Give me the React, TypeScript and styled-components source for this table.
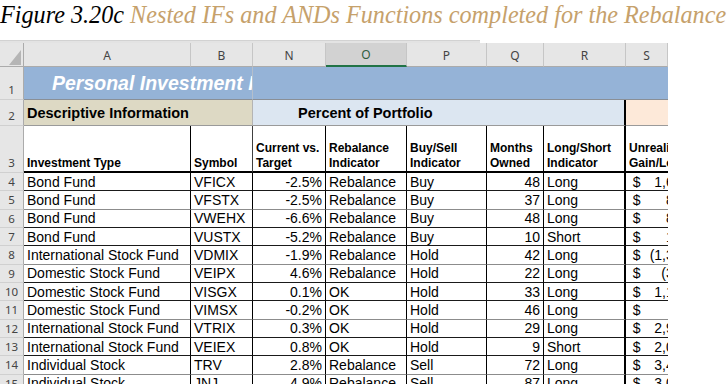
import { Fragment } from "react";
import styled, { createGlobalStyle } from "styled-components";

const GlobalStyle = createGlobalStyle`
    html, body {
        margin: 0;
        padding: 0;
        background: #fff;
        overflow: hidden;
    }
    body {
        font-family: "Liberation Sans", Arial, sans-serif;
    }
`

const Page = styled.div`
    width: 727px;
    height: 384px;
    overflow: hidden;
`
const Caption = styled.div`
    height: 40px;
    box-sizing: border-box;
    padding-top: 1px;
    font-family: "Liberation Serif", "Times New Roman", serif;
    font-style: italic;
    font-size: 24.2px;
    line-height: 28px;
    white-space: nowrap;
    color: #000;
`
const CaptionText = styled.span`
    color: #c6a16b;
`
const Strip = styled.div`
    width: 480px;
    height: 3px;
    box-sizing: border-box;
    background: #e3e3e3;
    border-top: 1px solid #d2d2d2;
`
const Sheet = styled.div`
    display: grid;
    width: 668px;
    grid-template-columns: 24px 167px 62px 73px 81px 80px 57px 82px 42px;
    grid-template-rows: 24px 33px 26px 47px;
    grid-auto-rows: 18.33px;
    font-size: 14px;
    color: #000;
`
const Corner = styled.div`
    background: #e6e6e6;
    border-right: 1px solid #ababab;
    border-bottom: 1px solid #ababab;
    box-sizing: border-box;
    display: flex;
    align-items: flex-end;
    justify-content: flex-end;
    padding: 0 1px 1px 0;
`
const ColHead = styled.div<{ $selected?: boolean }>`
    background: ${p => (p.$selected ? "#d2d2d2" : "#e6e6e6")};
    border-right: 1px solid #c6c6c6;
    border-bottom: ${p => (p.$selected ? "2px solid #217346" : "1px solid #ababab")};
    box-sizing: border-box;
    display: flex;
    align-items: center;
    justify-content: center;
    font-family: "Noto Sans", "Open Sans", sans-serif;
    font-size: 12px;
    color: ${p => (p.$selected ? "#2f5e40" : "#444")};
    padding-top: 1px;
`
const RowHead = styled.div<{ $bottom?: boolean }>`
    background: #e6e6e6;
    border-right: 1px solid #ababab;
    border-bottom: 1px solid #d0d0d0;
    box-sizing: border-box;
    display: flex;
    justify-content: center;
    align-items: ${p => (p.$bottom ? "flex-end" : "center")};
    padding-bottom: ${p => (p.$bottom ? "2px" : "0")};
    font-family: "Noto Sans", "Open Sans", sans-serif;
    font-size: 11.5px;
    color: #444;
`
const Band = styled.div<{ $bg: string; $span?: number; $edge?: string; $line?: string }>`
    grid-column: span ${p => p.$span ?? 1};
    background: ${p => p.$bg};
    border-right: ${p => p.$edge ?? "none"};
    border-bottom: 1px solid ${p => p.$line ?? "#9a9a9a"};
    box-sizing: border-box;
    display: flex;
    align-items: center;
    white-space: nowrap;
    overflow: hidden;
    font-weight: 700;
    font-size: 14.5px;
`
const BannerTitle = styled.span`
    align-self: flex-end;
    flex-shrink: 0;
    padding: 0 0 4px 28px;
    color: #fff;
    font-size: 19.5px;
    font-style: italic;
    line-height: 24px;
`
const SectionTitle = styled.span<{ $indent: number }>`
    padding-left: ${p => p.$indent}px;
`
const HeadCell = styled.div<{ $edge?: string }>`
    background: #fff;
    border-right: ${p => p.$edge ?? "1px solid #000"};
    border-bottom: 2px solid #000;
    box-sizing: border-box;
    display: flex;
    align-items: flex-end;
    padding: 0 2px 0 3px;
    font-weight: 700;
    font-size: 12px;
    line-height: 15px;
    white-space: nowrap;
    overflow: hidden;
`
const DataCell = styled.div<{ $right?: boolean; $edge?: string; $soft?: boolean }>`
    border-right: ${p => p.$edge ?? "1px solid #000"};
    border-bottom: 1px solid ${p => (p.$soft ? "#8c8c8c" : "#1a1a1a")};
    box-sizing: border-box;
    display: flex;
    align-items: center;
    justify-content: ${p => (p.$right ? "flex-end" : "flex-start")};
    padding: 0 ${p => (p.$right ? "3px" : "2px")} 0 3px;
    white-space: nowrap;
    overflow: hidden;
`
const MoneyCell = styled.div<{ $soft?: boolean }>`
    border-bottom: 1px solid ${p => (p.$soft ? "#8c8c8c" : "#1a1a1a")};
    box-sizing: border-box;
    display: flex;
    align-items: center;
    overflow: hidden;
    white-space: nowrap;
`
const Money = styled.div`
    flex-shrink: 0;
    width: 68px;
    box-sizing: border-box;
    padding-left: 6.7px;
    display: flex;
    justify-content: space-between;
`
const Amount = styled.span<{ $neg?: boolean }>`
    padding-right: ${p => (p.$neg ? "0" : "4.7px")};
`

type Row = {
    n: number
    type: string
    sym: string
    pct: string
    reb: string
    act: string
    months: number
    term: string
    gain: string
    neg?: boolean
}

const rows: Row[] = [
    { n: 4, type: "Bond Fund", sym: "VFICX", pct: "-2.5%", reb: "Rebalance", act: "Buy", months: 48, term: "Long", gain: "1,654" },
    { n: 5, type: "Bond Fund", sym: "VFSTX", pct: "-2.5%", reb: "Rebalance", act: "Buy", months: 37, term: "Long", gain: "812" },
    { n: 6, type: "Bond Fund", sym: "VWEHX", pct: "-6.6%", reb: "Rebalance", act: "Buy", months: 48, term: "Long", gain: "845" },
    { n: 7, type: "Bond Fund", sym: "VUSTX", pct: "-5.2%", reb: "Rebalance", act: "Buy", months: 10, term: "Short", gain: "136" },
    { n: 8, type: "International Stock Fund", sym: "VDMIX", pct: "-1.9%", reb: "Rebalance", act: "Hold", months: 42, term: "Long", gain: "(1,352)", neg: true },
    { n: 9, type: "Domestic Stock Fund", sym: "VEIPX", pct: "4.6%", reb: "Rebalance", act: "Hold", months: 22, term: "Long", gain: "(318)", neg: true },
    { n: 10, type: "Domestic Stock Fund", sym: "VISGX", pct: "0.1%", reb: "OK", act: "Hold", months: 33, term: "Long", gain: "1,172" },
    { n: 11, type: "Domestic Stock Fund", sym: "VIMSX", pct: "-0.2%", reb: "OK", act: "Hold", months: 46, term: "Long", gain: "64" },
    { n: 12, type: "International Stock Fund", sym: "VTRIX", pct: "0.3%", reb: "OK", act: "Hold", months: 29, term: "Long", gain: "2,915" },
    { n: 13, type: "International Stock Fund", sym: "VEIEX", pct: "0.8%", reb: "OK", act: "Hold", months: 9, term: "Short", gain: "2,041" },
    { n: 14, type: "Individual Stock", sym: "TRV", pct: "2.8%", reb: "Rebalance", act: "Sell", months: 72, term: "Long", gain: "3,418" },
    { n: 15, type: "Individual Stock", sym: "JNJ", pct: "4.9%", reb: "Rebalance", act: "Sell", months: 87, term: "Long", gain: "3,027" },
]

const columns = ["A", "B", "N", "O", "P", "Q", "R", "S"]
const thick = "2px solid #000"

export default function App() {
    return (
        <Page>
            <GlobalStyle />
            <Caption>
                Figure 3.20c <CaptionText>Nested IFs and ANDs Functions completed for the Rebalance</CaptionText>
            </Caption>
            <Strip />
            <Sheet>
                <Corner>
                    <svg width="13" height="15" viewBox="0 0 13 15">
                        <polygon points="12,0 12,15 0,15" fill="#b5b5b5" />
                    </svg>
                </Corner>
                {columns.map(c => (
                    <ColHead key={c} $selected={c === "O"}>{c}</ColHead>
                ))}

                <RowHead $bottom>1</RowHead>
                <Band $bg="#95b3d7" $span={2} $edge="1px solid #b4bfcc" $line="#8a8f96">
                    <BannerTitle>Personal Investment Portfolio</BannerTitle>
                </Band>
                <Band $bg="#95b3d7" $span={6} $line="#8a8f96" />

                <RowHead $bottom>2</RowHead>
                <Band $bg="#ddd9c4" $span={2} $edge="1px solid #b4b4b4">
                    <SectionTitle $indent={3}>Descriptive Information</SectionTitle>
                </Band>
                <Band $bg="#dce6f1" $span={5} $edge={thick}>
                    <SectionTitle $indent={45}>Percent of Portfolio</SectionTitle>
                </Band>
                <Band $bg="#fde9d9" />

                <RowHead $bottom>3</RowHead>
                <HeadCell>Investment Type</HeadCell>
                <HeadCell $edge="1px solid #404040">Symbol</HeadCell>
                <HeadCell>Current vs.<br />Target</HeadCell>
                <HeadCell>Rebalance<br />Indicator</HeadCell>
                <HeadCell>Buy/Sell<br />Indicator</HeadCell>
                <HeadCell>Months<br />Owned</HeadCell>
                <HeadCell $edge={thick}>Long/Short<br />Indicator</HeadCell>
                <HeadCell $edge="none">Unrealized<br />Gain/Loss</HeadCell>

                {rows.map(r => {
                    const soft = r.n % 3 === 2
                    return (
                        <Fragment key={r.n}>
                            <RowHead>{r.n}</RowHead>
                            <DataCell $soft={soft}>{r.type}</DataCell>
                            <DataCell $soft={soft}>{r.sym}</DataCell>
                            <DataCell $soft={soft} $right>{r.pct}</DataCell>
                            <DataCell $soft={soft}>{r.reb}</DataCell>
                            <DataCell $soft={soft}>{r.act}</DataCell>
                            <DataCell $soft={soft} $right>{r.months}</DataCell>
                            <DataCell $soft={soft} $edge={thick}>{r.term}</DataCell>
                            <MoneyCell $soft={soft}>
                                <Money>
                                    <span>$</span>
                                    <Amount $neg={r.neg}>{r.gain}</Amount>
                                </Money>
                            </MoneyCell>
                        </Fragment>
                    )
                })}
            </Sheet>
        </Page>
    )
}
